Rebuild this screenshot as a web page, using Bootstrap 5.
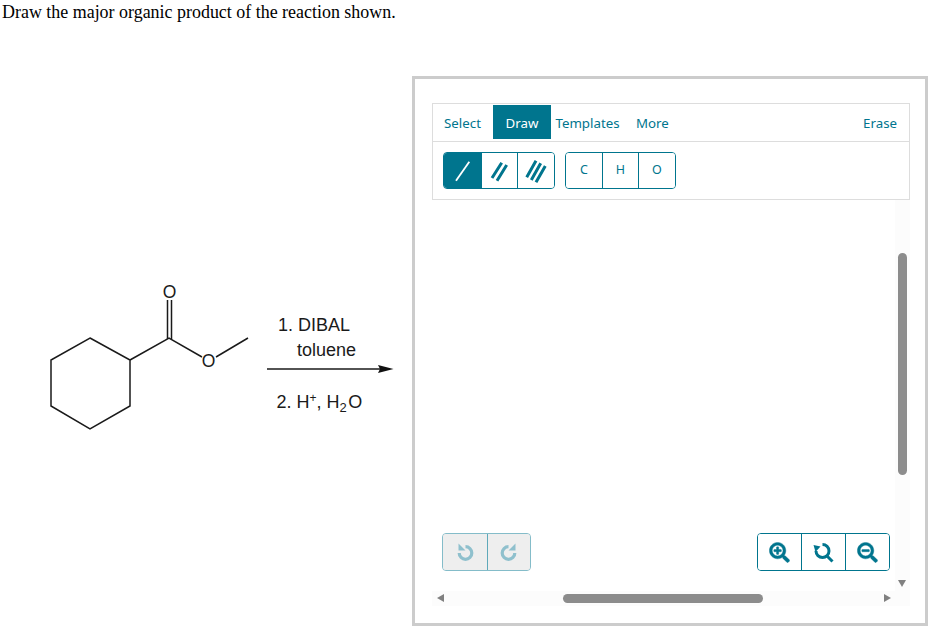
<!DOCTYPE html>
<html lang="en">
<head>
<meta charset="utf-8">
<title>Reaction question</title>
<link href="https://cdn.jsdelivr.net/npm/bootstrap@5.3.0/dist/css/bootstrap.min.css" rel="stylesheet">
<style>
html,body{height:633px;overflow:hidden;background:#fff}
body{font-family:"Liberation Sans",Arial,sans-serif;color:#000}
.prompt{font:17.950px/20px "Liberation Serif","Times New Roman",serif;margin:0;padding:2px 0 0 2px;height:76px;color:#000}
.scheme{width:412px;height:550px;flex:none;display:block}
.scheme text{font-family:"Liberation Sans",Arial,sans-serif;font-size:18px;fill:#1a1a1a}
.scheme text.atom{font-size:17.500px}
.widget{width:516px;height:550px;border:3px solid #ccc;padding:24px 17px 0 17px;font-family:"Noto Sans",sans-serif;font-size:13.300px;display:flex;flex-direction:column}
.toolbar{width:478px;height:97px;border:1px solid #ddd;flex:none}
.tabrow{height:38px;border-bottom:1px solid #ddd;padding:1px 12px 2px 10px;display:flex;align-items:stretch}
.tabbtn{background:none;border:0;padding:3px 0 0;color:#00758e;font:inherit;display:flex;align-items:center;justify-content:center;white-space:nowrap}
.tabbtn.first{width:39px}
.tabbtn.on{background:#00758e;color:#fff;width:58px;margin:0 4px 0 11px}
.tabbtn.third{width:65px}
.tabbtn.spaced{margin-left:16px}
.toolrow{padding:10px;display:flex;gap:10px}
.grp{display:flex;border:1px solid #00758e;border-radius:4px;height:37px;overflow:hidden;background:#fff}
.cell{background:#fff;border:0;border-left:1px solid #00758e;padding:0;color:#00758e;font:inherit;font-size:12.500px;display:flex;align-items:center;justify-content:center;width:36px}
.cell:first-child{border-left:0}
.cell.wide{width:37px}
.cell.on{background:#00758e}
.canvasarea{position:relative;flex:1 1 auto;width:478px}
.vtrack{position:absolute;left:463px;top:0;width:15px;height:391px;background:#fcfcfc}
.htrack{position:absolute;left:0;top:391px;width:478px;height:15px;background:#fcfcfc}
.vthumb{position:absolute;left:466px;top:53px;width:9px;height:222px;border-radius:5px;background:#8c8c8c}
.hthumb{position:absolute;left:131px;top:394px;width:200px;height:9px;border-radius:5px;background:#8c8c8c}
.tri{position:absolute;width:0;height:0;border-style:solid;border-color:transparent}
.tri-l{left:5px;top:394px;border-width:4.500px 7px 4.500px 0;border-right-color:#808080}
.tri-r{left:452px;top:394px;border-width:4.500px 0 4.500px 7px;border-left-color:#808080}
.tri-d{left:466px;top:380px;border-width:7px 4.500px 0 4.500px;border-top-color:#808080}
.undo{position:absolute;left:10px;top:333px;width:89px;height:38px;border-color:#84bcc9;background:#eee}
.undo .cell{background:#eee;border-left-color:#5fa9ba;width:44px}
.zoomgrp{position:absolute;left:325px;top:333px;width:133px;height:38px}
.zoomgrp .cell{width:44px}
.zoomgrp .cell:first-child{width:43px}
.mirror{transform:scaleX(-1)}
.ico-main{fill:#00758e;stroke:#00758e;stroke-width:10px}
</style>
</head>
<body>
<p class="prompt">Draw the major organic product of the reaction shown.</p>
<main class="d-flex">
  <svg class="scheme" viewBox="0 76 412 550" role="img" aria-label="Methyl cyclohexanecarboxylate reaction scheme">
    <g fill="none" stroke="#1a1a1a" stroke-width="1.500">
      <path d="M90 338 130 360V406L90 429 51 406V360Z"/>
      <path d="M130 360 169 338 202 357M216 357 248 338"/>
      <path d="M167.500 339V300M171.500 339V300"/>
      <path d="M267 369H382" stroke-width="1.300"/>
    </g>
    <path d="M378 365 393.500 369 378 373 380 369Z" fill="#111"/>
    <text class="atom" x="169.500" y="298" text-anchor="middle">O</text>
    <text class="atom" x="208.500" y="367" text-anchor="middle">O</text>
    <text x="278" y="331">1. DIBAL</text>
    <text x="297" y="356">toluene</text>
    <text x="276.500" y="408">2. H<tspan font-size="12" dy="-6">+</tspan><tspan dy="6">, H</tspan><tspan font-size="13" dy="4">2</tspan><tspan dy="-4" dx="1.500">O</tspan></text>
  </svg>
  <section class="widget">
    <div class="toolbar">
      <div class="tabrow">
        <button class="tabbtn first" type="button">Select</button>
        <button class="tabbtn on" type="button">Draw</button>
        <button class="tabbtn third" type="button">Templates</button>
        <button class="tabbtn spaced" type="button">More</button>
        <button class="tabbtn ms-auto" type="button">Erase</button>
      </div>
      <div class="toolrow">
        <div class="grp">
          <button class="cell wide on" type="button" aria-label="Single bond"><svg width="22" height="24" viewBox="451 159 22 24"><path d="M455 180.700 468.300 161.700" stroke="#fff" stroke-width="1.800"/></svg></button>
          <button class="cell" type="button" aria-label="Double bond"><svg width="22" height="24" viewBox="488 159 22 24"><path d="M491 178 500.700 162.700M496 180.700 505.700 165" stroke="#00758e" stroke-width="3"/></svg></button>
          <button class="cell wide" type="button" aria-label="Triple bond"><svg width="24" height="26" viewBox="524 158 24 26"><path d="M526.700 177.300 536 160.700M531.300 180 540.700 163.300M536 182.300 545.300 166" stroke="#00758e" stroke-width="3"/></svg></button>
        </div>
        <div class="grp">
          <button class="cell" type="button">C</button>
          <button class="cell" type="button">H</button>
          <button class="cell wide" type="button">O</button>
        </div>
      </div>
    </div>
    <div class="canvasarea">
      <div class="vtrack"></div>
      <div class="htrack"></div>
      <div class="vthumb"></div>
      <div class="hthumb"></div>
      <span class="tri tri-l"></span>
      <span class="tri tri-r"></span>
      <span class="tri tri-d"></span>
      <div class="grp undo">
        <button class="cell" type="button" aria-label="Undo"><svg width="18" height="20" viewBox="0 0 18 20"><circle cx="9.500" cy="11" r="6.300" fill="none" stroke="#8fc0cd" stroke-width="3.200" stroke-dasharray="29 10" stroke-dashoffset="0" transform="rotate(-90 9.500 11)"/><path d="M2.500 1.500 2.500 8.500 9.500 8.500Z" fill="#8fc0cd"/></svg></button>
        <button class="cell" type="button" aria-label="Redo"><svg class="mirror" width="18" height="20" viewBox="0 0 18 20"><circle cx="9.500" cy="11" r="6.300" fill="none" stroke="#8fc0cd" stroke-width="3.200" stroke-dasharray="29 10" stroke-dashoffset="0" transform="rotate(-90 9.500 11)"/><path d="M2.500 1.500 2.500 8.500 9.500 8.500Z" fill="#8fc0cd"/></svg></button>
      </div>
      <div class="grp zoomgrp">
        <button class="cell" type="button" aria-label="Zoom in"><svg width="21" height="21" viewBox="-10 -10 532 532"><path class="ico-main" d="M304 192v32c0 6.600-5.400 12-12 12h-56v56c0 6.600-5.400 12-12 12h-32c-6.600 0-12-5.400-12-12v-56h-56c-6.600 0-12-5.400-12-12v-32c0-6.600 5.400-12 12-12h56v-56c0-6.600 5.400-12 12-12h32c6.600 0 12 5.400 12 12v56h56c6.600 0 12 5.400 12 12zm201 284.700L476.700 505c-9.400 9.400-24.600 9.400-33.900 0L343 405.300c-4.500-4.500-7-10.600-7-17V372c-35.300 27.600-79.700 44-128 44C93.100 416 0 322.900 0 208S93.100 0 208 0s208 93.100 208 208c0 48.300-16.400 92.700-44 128h16.300c6.400 0 12.500 2.500 17 7l99.700 99.700c9.300 9.400 9.300 24.600 0 34zM344 208c0-75.200-60.800-136-136-136S72 132.800 72 208s60.800 136 136 136 136-60.800 136-136z"/></svg></button>
        <button class="cell" type="button" aria-label="Reset zoom"><svg width="21" height="21" viewBox="0 0 21 21"><circle cx="9.500" cy="9" r="6.500" fill="none" stroke="#00758e" stroke-width="3" stroke-dasharray="30 11" transform="rotate(-90 9.500 9)"/><path d="M.5 3 7.500 4.500 2.500 10Z" fill="#00758e"/><path d="M13.500 13.500 19.500 19.500" stroke="#00758e" stroke-width="3"/></svg></button>
        <button class="cell" type="button" aria-label="Zoom out"><svg width="21" height="21" viewBox="-10 -10 532 532"><path class="ico-main" d="M304 192v32c0 6.600-5.400 12-12 12H124c-6.600 0-12-5.400-12-12v-32c0-6.600 5.400-12 12-12h168c6.600 0 12 5.400 12 12zm201 284.700L476.700 505c-9.400 9.400-24.600 9.400-33.900 0L343 405.300c-4.500-4.500-7-10.600-7-17V372c-35.300 27.600-79.700 44-128 44C93.100 416 0 322.900 0 208S93.100 0 208 0s208 93.100 208 208c0 48.300-16.400 92.700-44 128h16.300c6.400 0 12.500 2.500 17 7l99.700 99.700c9.300 9.400 9.300 24.600 0 34zM344 208c0-75.200-60.800-136-136-136S72 132.800 72 208s60.800 136 136 136 136-60.800 136-136z"/></svg></button>
      </div>
    </div>
  </section>
</main>
</body>
</html>
